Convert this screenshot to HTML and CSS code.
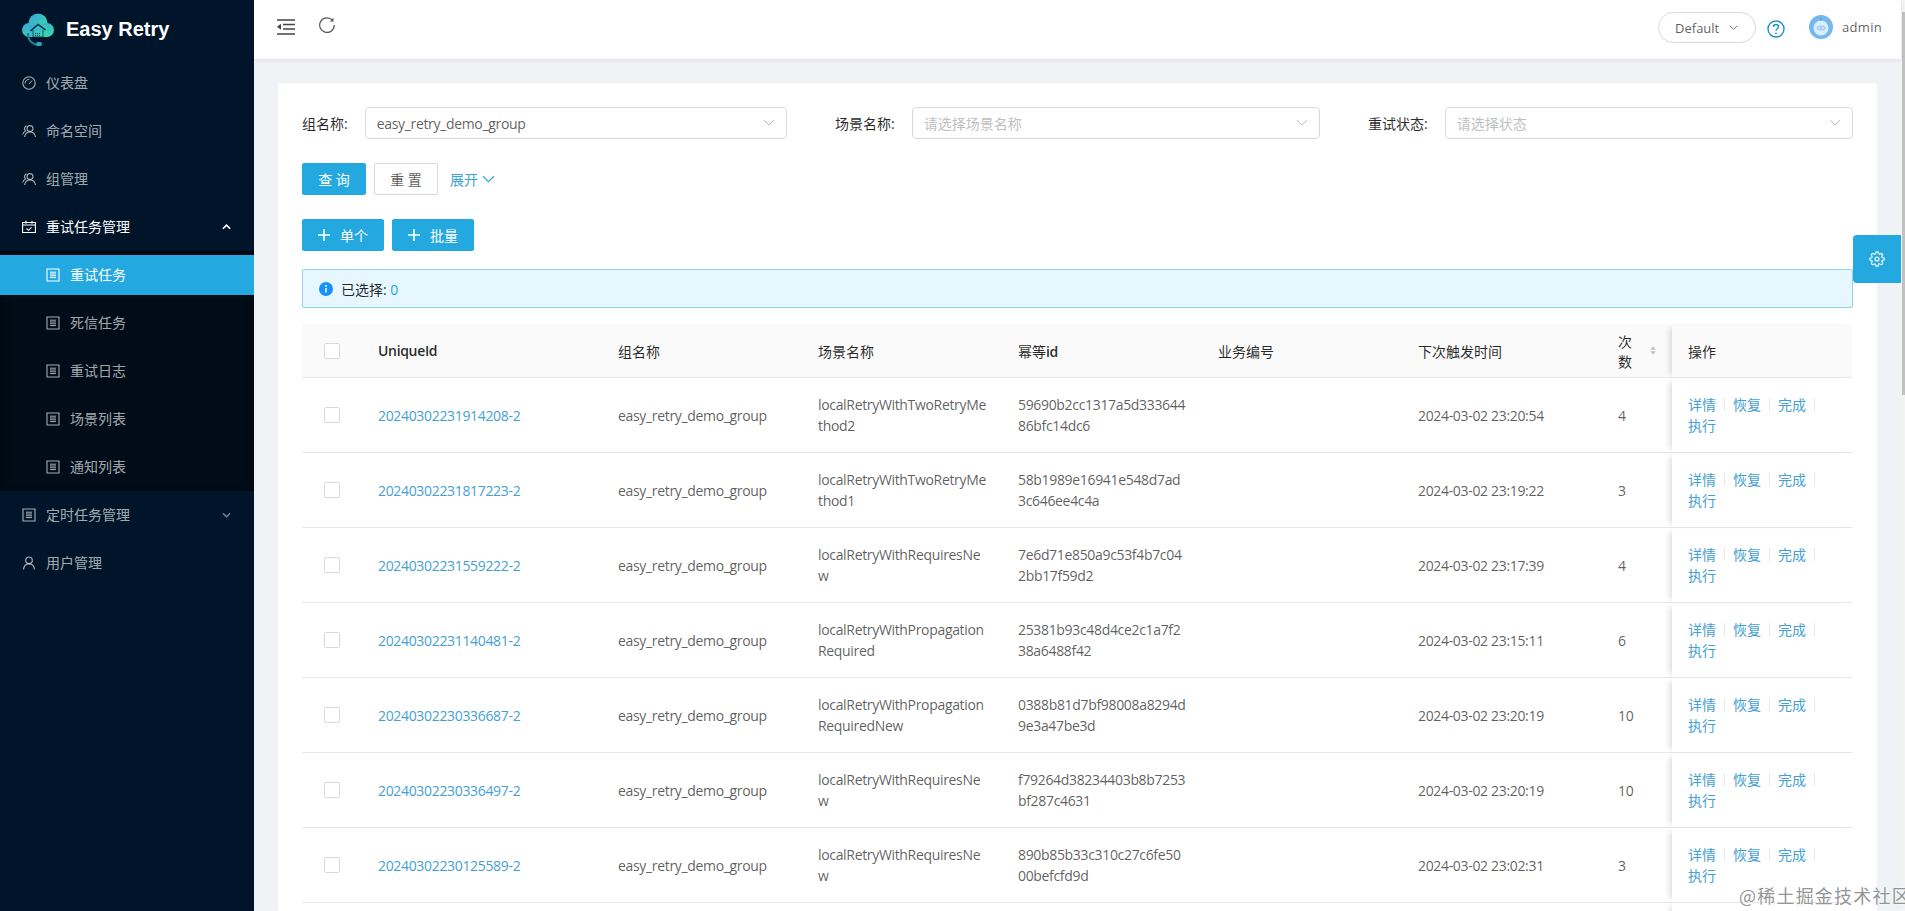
FILE: index.html
```html
<!DOCTYPE html>
<html lang="zh-CN">
<head>
<meta charset="utf-8">
<title>Easy Retry</title>
<link rel="stylesheet" href="styles.css">
</head>
<body>
<svg class="sprites" width="0" height="0" aria-hidden="true">
  <symbol id="i-doc" viewBox="0 0 14 14"><path d="M1 1h12v12H1z" fill="none" stroke="currentColor" stroke-width="1.1"/><path d="M4 4.2h6M4 6h6M4 7.8h6M4 9.6h6" stroke="currentColor" stroke-width="1"/></symbol>
  <symbol id="i-team" viewBox="0 0 14 14"><circle cx="8" cy="4.6" r="3" fill="none" stroke="currentColor" stroke-width="1.1"/><path d="M2.6 13c.5-3 2.4-5 5.4-5s4.9 2 5.4 5M4.6 1.7C3.2 2.2 2.5 3.3 2.5 4.6c0 1 .4 1.8 1 2.4C2 7.800 1 9 .7 10.500" fill="none" stroke="currentColor" stroke-width="1.1"/></symbol>
  <symbol id="i-down" viewBox="0 0 12 8"><path d="M1 1l5 5 5-5" fill="none" stroke="currentColor" stroke-width="1"/></symbol>
  <symbol id="i-plus" viewBox="0 0 12 12"><path d="M6 0v12M0 6h12" stroke="currentColor" stroke-width="1.600"/></symbol>
</svg>
<div class="app">
  <aside class="sider">
    <div class="brand">
      <svg class="logo" viewBox="0 0 32 34">
        <defs><linearGradient id="lg" x1="0" y1="0" x2="1" y2="1"><stop offset="0" stop-color="#3aa6dc"/><stop offset="1" stop-color="#38dca4"/></linearGradient></defs>
        <g fill="url(#lg)">
          <circle cx="16" cy="10" r="9.500"/>
          <circle cx="7" cy="17" r="7"/>
          <circle cx="25" cy="17" r="7"/>
          <rect x="7" y="12" width="18" height="12"/>
        </g>
        <path d="M8.500 18l7.500-6.500 7.500 5.500" fill="none" stroke="#0a2a3e" stroke-width="1.500"/>
        <path d="M11 17v7h10v-7" fill="none" stroke="#0a2a3e" stroke-width="1" opacity=".7"/>
        <path d="M13 20.500h6M13 22.500h6" stroke="#0a2a3e" stroke-width="1" stroke-dasharray="1 1"/>
        <path d="M6 20c-.5 6 3 11 10 12" fill="none" stroke="#1d7f94" stroke-width="2"/>
        <rect x="14" y="29" width="6" height="4" rx="2" fill="#2aa7c4"/>
      </svg>
      <span class="brand-name">Easy Retry</span>
    </div>
    <nav class="menu">
      <a class="menu-item"><svg class="mi" viewBox="0 0 14 14"><circle cx="7" cy="7" r="6.200" fill="none" stroke="currentColor" stroke-width="1.100"/><path d="M7 8l3-3.500M3 7.500C3 5 5 3.200 7.500 3.200" fill="none" stroke="currentColor" stroke-width="1"/></svg><span>仪表盘</span></a>
      <a class="menu-item"><svg class="mi"><use href="#i-team"/></svg><span>命名空间</span></a>
      <a class="menu-item"><svg class="mi"><use href="#i-team"/></svg><span>组管理</span></a>
      <a class="menu-item is-open"><svg class="mi" viewBox="0 0 14 14"><path d="M.6 2.500h12.800v10H.6zM.6 5h12.800M4 .8v3M10 .8v3" fill="none" stroke="currentColor" stroke-width="1.100"/><path d="M4.500 8.500l2 1.800 3-3" fill="none" stroke="currentColor" stroke-width="1.100"/></svg><span>重试任务管理</span><svg class="caret" viewBox="0 0 10 6"><path d="M1 5l4-4 4 4" fill="none" stroke="currentColor" stroke-width="1.800"/></svg></a>
      <div class="submenu">
        <a class="menu-item sub active"><svg class="mi"><use href="#i-doc"/></svg><span>重试任务</span></a>
        <a class="menu-item sub"><svg class="mi"><use href="#i-doc"/></svg><span>死信任务</span></a>
        <a class="menu-item sub"><svg class="mi"><use href="#i-doc"/></svg><span>重试日志</span></a>
        <a class="menu-item sub"><svg class="mi"><use href="#i-doc"/></svg><span>场景列表</span></a>
        <a class="menu-item sub"><svg class="mi"><use href="#i-doc"/></svg><span>通知列表</span></a>
      </div>
      <a class="menu-item"><svg class="mi"><use href="#i-doc"/></svg><span>定时任务管理</span><svg class="caret dim" viewBox="0 0 10 6"><path d="M1 1l4 4 4-4" fill="none" stroke="currentColor" stroke-width="1.800"/></svg></a>
      <a class="menu-item"><svg class="mi" viewBox="0 0 14 14"><circle cx="7" cy="4.300" r="3.300" fill="none" stroke="currentColor" stroke-width="1.200"/><path d="M1.500 13.500c.3-3.500 2.500-5.700 5.500-5.700s5.200 2.200 5.500 5.700" fill="none" stroke="currentColor" stroke-width="1.200"/></svg><span>用户管理</span></a>
    </nav>
  </aside>
  <div class="main">
    <header class="topbar">
      <div class="top-left">
        <svg class="tool" viewBox="0 0 18 16"><path d="M0 1h18M6 5.500h12M6 10h12M0 15h18" stroke="#444" stroke-width="1.500"/><path d="M0 7.800l4-3v6z" fill="#444"/></svg>
        <svg class="tool reload" viewBox="0 0 16 16"><path d="M13.600 3.400A7.300 7.300 0 1 0 15.300 8" fill="none" stroke="#555" stroke-width="1.200"/><path d="M14.500 .8v3.600h-3.600z" fill="#555"/></svg>
      </div>
      <div class="top-right">
        <div class="env">Default<svg class="env-arrow"><use href="#i-down"/></svg></div>
        <svg class="help" viewBox="0 0 18 18"><circle cx="9" cy="9" r="8" fill="none" stroke="#1d8fc9" stroke-width="1.400"/><path d="M6.500 7c0-1.600 1.100-2.500 2.500-2.500s2.500.9 2.500 2.300c0 2-2.500 2-2.500 4" fill="none" stroke="#1d8fc9" stroke-width="1.400"/><circle cx="9" cy="13.300" r=".9" fill="#1d8fc9"/></svg>
        <svg class="avatar" viewBox="0 0 24 24"><circle cx="12" cy="12" r="12" fill="#74b8ef"/><circle cx="12" cy="13" r="7.500" fill="#dbeefc"/><rect x="7.500" y="10.500" width="9" height="5" rx="2.500" fill="#a8d0f4"/><circle cx="10" cy="13" r=".8" fill="#fff"/><circle cx="14" cy="13" r=".8" fill="#fff"/><path d="M12 5.500V3" stroke="#4f9ee0" stroke-width="1.500"/></svg>
        <span class="user">admin</span>
      </div>
    </header>
    <main class="content">
      <section class="card">
        <form class="filters">
          <div class="field"><label>组名称:</label><div class="select"><span class="lat">easy_retry_demo_group</span><svg class="sel-arrow"><use href="#i-down"/></svg></div></div>
          <div class="field"><label>场景名称:</label><div class="select ph">请选择场景名称<svg class="sel-arrow"><use href="#i-down"/></svg></div></div>
          <div class="field"><label>重试状态:</label><div class="select ph">请选择状态<svg class="sel-arrow"><use href="#i-down"/></svg></div></div>
        </form>
        <div class="actions">
          <button class="btn primary" type="button">查 询</button>
          <button class="btn" type="button">重 置</button>
          <a class="expand">展开<svg class="exp-arrow"><use href="#i-down"/></svg></a>
        </div>
        <div class="actions adds">
          <button class="btn primary add" type="button"><svg class="plus"><use href="#i-plus"/></svg>单个</button>
          <button class="btn primary add" type="button"><svg class="plus"><use href="#i-plus"/></svg>批量</button>
        </div>
        <div class="alert">
          <svg class="info" viewBox="0 0 14 14"><circle cx="7" cy="7" r="7" fill="#1890ff"/><path d="M7 6v4.500" stroke="#fff" stroke-width="1.500"/><circle cx="7" cy="3.900" r="1" fill="#fff"/></svg>
          <span>已选择: <a class="count">0</a></span>
        </div>
        <table class="grid">
          <colgroup><col class="c1"><col class="c2"><col class="c3"><col class="c4"><col class="c5"><col class="c6"><col class="c7"><col class="c8"><col class="c9"></colgroup>
          <thead>
            <tr>
              <th class="chk"><span class="box"></span></th>
              <th class="strong">UniqueId</th>
              <th>组名称</th>
              <th>场景名称</th>
              <th>幂等<b>id</b></th>
              <th>业务编号</th>
              <th>下次触发时间</th>
              <th><span class="sorter">次数<svg class="sort" viewBox="0 0 9 14"><path d="M4.500 1l4 5H.5zM4.500 13l-4-5h8z" fill="#bfbfbf"/></svg></span></th>
              <th class="fix">操作</th>
            </tr>
          </thead>
          <tbody>
            <tr><td class="chk"><span class="box"></span></td><td><a class="lnk">20240302231914208-2</a></td><td>easy_retry_demo_group</td><td>localRetryWithTwoRetryMethod2</td><td>59690b2cc1317a5d33364486bfc14dc6</td><td></td><td>2024-03-02 23:20:54</td><td>4</td><td class="fix"><div class="ops"><a>详情</a><i></i><a>恢复</a><i></i><a>完成</a><i></i><a>执行</a></div></td></tr>
            <tr><td class="chk"><span class="box"></span></td><td><a class="lnk">20240302231817223-2</a></td><td>easy_retry_demo_group</td><td>localRetryWithTwoRetryMethod1</td><td>58b1989e16941e548d7ad3c646ee4c4a</td><td></td><td>2024-03-02 23:19:22</td><td>3</td><td class="fix"><div class="ops"><a>详情</a><i></i><a>恢复</a><i></i><a>完成</a><i></i><a>执行</a></div></td></tr>
            <tr><td class="chk"><span class="box"></span></td><td><a class="lnk">20240302231559222-2</a></td><td>easy_retry_demo_group</td><td>localRetryWithRequiresNew</td><td>7e6d71e850a9c53f4b7c042bb17f59d2</td><td></td><td>2024-03-02 23:17:39</td><td>4</td><td class="fix"><div class="ops"><a>详情</a><i></i><a>恢复</a><i></i><a>完成</a><i></i><a>执行</a></div></td></tr>
            <tr><td class="chk"><span class="box"></span></td><td><a class="lnk">20240302231140481-2</a></td><td>easy_retry_demo_group</td><td>localRetryWithPropagationRequired</td><td>25381b93c48d4ce2c1a7f238a6488f42</td><td></td><td>2024-03-02 23:15:11</td><td>6</td><td class="fix"><div class="ops"><a>详情</a><i></i><a>恢复</a><i></i><a>完成</a><i></i><a>执行</a></div></td></tr>
            <tr><td class="chk"><span class="box"></span></td><td><a class="lnk">20240302230336687-2</a></td><td>easy_retry_demo_group</td><td>localRetryWithPropagationRequiredNew</td><td>0388b81d7bf98008a8294d9e3a47be3d</td><td></td><td>2024-03-02 23:20:19</td><td>10</td><td class="fix"><div class="ops"><a>详情</a><i></i><a>恢复</a><i></i><a>完成</a><i></i><a>执行</a></div></td></tr>
            <tr><td class="chk"><span class="box"></span></td><td><a class="lnk">20240302230336497-2</a></td><td>easy_retry_demo_group</td><td>localRetryWithRequiresNew</td><td>f79264d38234403b8b7253bf287c4631</td><td></td><td>2024-03-02 23:20:19</td><td>10</td><td class="fix"><div class="ops"><a>详情</a><i></i><a>恢复</a><i></i><a>完成</a><i></i><a>执行</a></div></td></tr>
            <tr><td class="chk"><span class="box"></span></td><td><a class="lnk">20240302230125589-2</a></td><td>easy_retry_demo_group</td><td>localRetryWithRequiresNew</td><td>890b85b33c310c27c6fe5000befcfd9d</td><td></td><td>2024-03-02 23:02:31</td><td>3</td><td class="fix"><div class="ops"><a>详情</a><i></i><a>恢复</a><i></i><a>完成</a><i></i><a>执行</a></div></td></tr>
            <tr><td class="chk"></td><td></td><td></td><td></td><td></td><td></td><td></td><td></td><td class="fix"></td></tr>
          </tbody>
        </table>
      </section>
    </main>
  </div>
  <div class="scrollbar"><div class="thumb"></div></div>
</div>
<div class="settings"><svg viewBox="0 0 24 24" fill="none" stroke="#fff" stroke-width="1.700"><path d="M12 15a3 3 0 1 0 0-6 3 3 0 0 0 0 6z"/><path d="M19.400 15a1.650 1.650 0 0 0 .33 1.820l.06.06a2 2 0 0 1 0 2.830 2 2 0 0 1-2.830 0l-.06-.06a1.650 1.650 0 0 0-1.820-.33 1.650 1.650 0 0 0-1 1.510V21a2 2 0 0 1-2 2 2 2 0 0 1-2-2v-.09A1.650 1.650 0 0 0 9 19.400a1.650 1.650 0 0 0-1.820.33l-.06.06a2 2 0 0 1-2.830 0 2 2 0 0 1 0-2.830l.06-.06a1.650 1.650 0 0 0 .33-1.820 1.650 1.650 0 0 0-1.510-1H3a2 2 0 0 1-2-2 2 2 0 0 1 2-2h.09A1.650 1.650 0 0 0 4.600 9a1.650 1.650 0 0 0-.33-1.820l-.06-.06a2 2 0 0 1 0-2.830 2 2 0 0 1 2.830 0l.06.06a1.650 1.650 0 0 0 1.820.33H9a1.650 1.650 0 0 0 1-1.510V3a2 2 0 0 1 2-2 2 2 0 0 1 2 2v.09a1.650 1.650 0 0 0 1 1.510 1.650 1.650 0 0 0 1.820-.33l.06-.06a2 2 0 0 1 2.830 0 2 2 0 0 1 0 2.830l-.06.06a1.650 1.650 0 0 0-.33 1.820V9a1.650 1.650 0 0 0 1.510 1H21a2 2 0 0 1 2 2 2 2 0 0 1-2 2h-.09a1.650 1.650 0 0 0-1.510 1z"/></svg></div>
<div class="watermark">@稀土掘金技术社区</div>
</body>
</html>
```
FILE: styles.css
```css
* { box-sizing: border-box; }
html, body { margin: 0; height: 100%; overflow: hidden; }
body {
  font-family: "Open Sans", "Noto Sans CJK SC", sans-serif;
  font-size: 14px;
  color: rgba(0, 0, 0, .65);
  background: #fff;
}
a { color: inherit; text-decoration: none; }
.sprites { position: absolute; }

.app { display: flex; height: 911px; overflow: hidden; }

/* sidebar */
.sider { width: 254px; flex: none; background: #001529; color: rgba(255, 255, 255, .65); }
.brand { height: 59px; display: flex; align-items: center; padding-left: 22px; gap: 13px; }
.logo { width: 32px; height: 34px; flex: none; margin-top: 1px; }
.brand-name { font-family: "Liberation Sans", sans-serif; font-size: 20px; font-weight: 700; color: #fff; margin-left: -1px; }
.menu { padding-top: 4px; display: flex; flex-direction: column; }
.menu-item { height: 40px; margin-bottom: 8px; padding: 0 22px; display: flex; align-items: center; gap: 10px; flex: none; }
.menu-item span { margin-top: -2px; }
.menu-item.is-open { color: #fff; margin-bottom: 4px; }
.mi { width: 14px; height: 14px; flex: none; }
.caret { width: 9px; height: 6px; margin-left: auto; margin-right: 1px; color: #fff; }
.caret.dim { color: rgba(255, 255, 255, .45); }
.submenu { background: #000c17; padding: 4px 0; margin-bottom: 4px; box-shadow: inset 0 2px 8px rgba(0, 0, 0, .45); display: flex; flex-direction: column; }
.submenu .menu-item:last-child { margin-bottom: 0; }
.sub { padding-left: 46px; }
.sub.active { background: #23a8e0; color: #fff; }

/* topbar */
.main { width: 1647px; flex: none; display: flex; flex-direction: column; background: #f0f2f5; }
.topbar { height: 59px; flex: none; background: #fff; box-shadow: 0 1px 4px rgba(0, 21, 41, .08); display: flex; justify-content: space-between; position: relative; }
.top-left { display: flex; align-items: flex-start; padding: 19px 0 0 23px; gap: 24px; }
.tool { width: 18px; height: 16px; }
.reload { width: 16px; margin-top: -2px; }
.top-right { display: flex; align-items: flex-start; padding: 12px 19px 0 0; }
.env { width: 98px; height: 31px; border: 1px solid #d9d9d9; border-radius: 16px; display: flex; align-items: center; padding-left: 16px; font-size: 13px; color: rgba(0, 0, 0, .65); }
.env-arrow { width: 9px; height: 6px; margin-left: 10px; }
.help { width: 18px; height: 18px; margin: 8px 0 0 11px; }
.avatar { width: 24px; height: 24px; margin: 3px 0 0 24px; }
.user { margin: 6px 0 0 9px; font-size: 13px; letter-spacing: .3px; line-height: 18px; }

/* card */
.content { flex: 1; padding: 24px 24px 0; overflow: hidden; }
.card { background: #fff; border-radius: 2px; padding: 24px; height: 100%; }
.filters { display: grid; grid-template-columns: repeat(3, 1fr); gap: 48px; }
.field { display: flex; align-items: center; gap: 8px; }
.field label { color: rgba(0, 0, 0, .85); white-space: nowrap; flex: none; width: auto; padding-right: 9px; }
.select { flex: 1; height: 32px; border: 1px solid #d9d9d9; border-radius: 4px; padding: 0 11px; display: flex; align-items: center; justify-content: space-between; }
.select.ph { color: #bfbfbf; }
.lat { letter-spacing: -.33px; }
.sel-arrow { width: 12px; height: 8px; color: #bfbfbf; }
.actions { display: flex; align-items: center; gap: 8px; margin-top: 24px; }
.actions.adds { margin-top: 24px; }
.btn { height: 32px; width: 64px; padding: 0; font: inherit; border: 1px solid #d9d9d9; border-radius: 2px; background: #fff; color: rgba(0, 0, 0, .65); display: inline-flex; align-items: center; justify-content: center; }
.btn.primary { background: #23a8e0; border-color: #23a8e0; color: #fff; }
.btn.add { width: 82px; }
.plus { width: 12px; height: 12px; margin-right: 10px; }
.expand { color: #3ca3d8; display: inline-flex; align-items: center; margin-left: 4px; }
.exp-arrow { width: 13px; height: 9px; margin-left: 4px; }
.alert { margin-top: 18px; height: 39px; background: #e6f7ff; border: 1px solid #91d5ec; border-radius: 2px; padding: 0 16px; display: flex; align-items: center; gap: 8px; color: rgba(0, 0, 0, .85); }
.info { width: 14px; height: 14px; flex: none; }
.count { color: #23a8e0; }

/* table */
.grid { width: 1550px; table-layout: fixed; border-collapse: separate; border-spacing: 0; margin-top: 16px; }
.c1 { width: 60px; } .c2 { width: 240px; } .c3 { width: 200px; } .c4 { width: 200px; } .c5 { width: 200px; }
.c6 { width: 200px; } .c7 { width: 200px; } .c8 { width: 70px; } .c9 { width: 180px; }
.grid th { height: 54px; background: #fafafa; border-bottom: 1px solid #e8e8e8; padding: 0 16px; font-weight: 400; text-align: left; color: rgba(0, 0, 0, .85); }
.grid th.strong, .grid th b { font-weight: 600; letter-spacing: -.33px; }
.grid td { height: 75px; border-bottom: 1px solid #e8e8e8; padding: 0 16px; overflow-wrap: anywhere; line-height: 21px; letter-spacing: -.33px; }
.grid .chk { padding: 0 0 0 22px; }
.box { display: block; width: 16px; height: 16px; border: 1px solid #d9d9d9; border-radius: 2px; background: #fff; }
.lnk { color: #459fd4; }
.sorter { display: inline-flex; align-items: center; gap: 10px; }
.sort { width: 8px; height: 13px; }
.grid .fix { position: relative; box-shadow: -6px 0 6px -4px rgba(0, 0, 0, .15); }
.ops { display: flex; flex-wrap: wrap; align-items: center; color: #459fd4; letter-spacing: 0; }
.ops i { width: 1px; height: 13px; background: #e8e8e8; margin: 0 8px; }

/* overlays */
.scrollbar { width: 4px; flex: none; height: 911px; background: #f3f3f3; padding: 12px 0 0 1px; }
.thumb { height: 383px; background: #c1c1c1; }
.settings { position: absolute; left: 1853px; top: 235px; width: 48px; height: 48px; background: #23a8e0; border-radius: 4px 0 0 4px; display: flex; align-items: center; justify-content: center; }
.settings svg { width: 16px; height: 16px; }
.watermark { position: absolute; left: 1739px; top: 882px; font-family: "Noto Sans CJK SC", sans-serif; font-size: 18px; letter-spacing: 1.200px; color: rgba(120, 120, 120, .8); text-shadow: 0 0 2px #fff; white-space: nowrap; }
```
